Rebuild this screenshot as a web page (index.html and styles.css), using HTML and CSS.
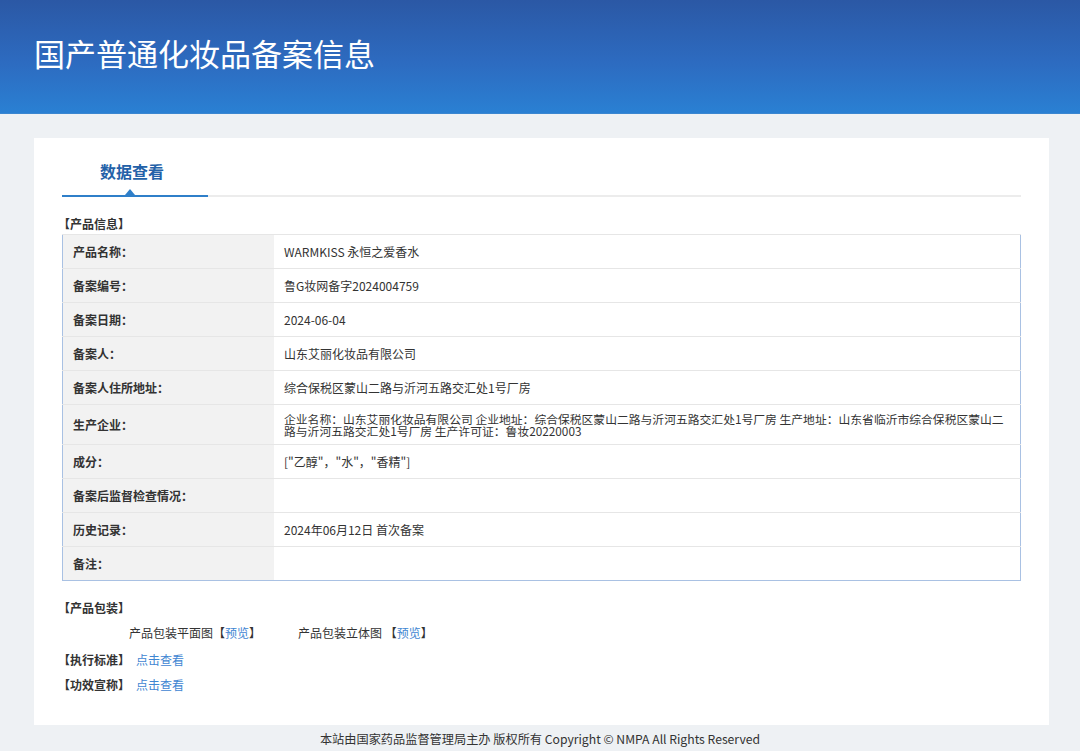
FILE: index.html
```html
<!DOCTYPE html>
<html lang="zh-CN">
<head>
    <meta charset="UTF-8">
    <meta name="viewport" content="width=device-width, initial-scale=1.0">
    <title>国产普通化妆品备案信息</title>
    <link rel="stylesheet" href="styles.css">
</head>
<body>
    <header class="banner">
        <h1>国产普通化妆品备案信息</h1>
    </header>

    <main class="card">
        <div class="tabs">
            <span class="tab active">数据查看</span>
        </div>

        <h3 class="section-title">【产品信息】</h3>
        <table class="info">
            <tr><th>产品名称：</th><td>WARMKISS 永恒之爱香水</td></tr>
            <tr><th>备案编号：</th><td>鲁G妆网备字2024004759</td></tr>
            <tr><th>备案日期：</th><td>2024-06-04</td></tr>
            <tr><th>备案人：</th><td>山东艾丽化妆品有限公司</td></tr>
            <tr><th>备案人住所地址：</th><td>综合保税区蒙山二路与沂河五路交汇处1号厂房</td></tr>
            <tr class="tall"><th>生产企业：</th><td class="multi">企业名称：山东艾丽化妆品有限公司 企业地址：综合保税区蒙山二路与沂河五路交汇处1号厂房 生产地址：山东省临沂市综合保税区蒙山二路与沂河五路交汇处1号厂房 生产许可证：鲁妆20220003</td></tr>
            <tr><th>成分：</th><td>["乙醇"，"水"，"香精"]</td></tr>
            <tr><th>备案后监督检查情况：</th><td></td></tr>
            <tr><th>历史记录：</th><td>2024年06月12日 首次备案</td></tr>
            <tr><th>备注：</th><td></td></tr>
        </table>

        <h3 class="section-title pack-title">【产品包装】</h3>
        <div class="pack">
            <span>产品包装平面图【<a href="#">预览</a>】</span>
            <span>产品包装立体图 【<a href="#">预览</a>】</span>
        </div>

        <div class="line"><b>【执行标准】</b><a href="#">点击查看</a></div>
        <div class="line"><b>【功效宣称】</b><a href="#">点击查看</a></div>
    </main>

    <footer class="footer">本站由国家药品监督管理局主办 版权所有 Copyright © NMPA All Rights Reserved</footer>
</body>
</html>
```

FILE: styles.css
```css
body {
    margin: 0;
    padding: 0;
    background-color: #eef1f4;
    font-family: "Noto Sans CJK SC", "Noto Sans", sans-serif;
    font-size: 12px;
    color: #333;
}

.banner {
    height: 114px;
    background: linear-gradient(180deg, #2b58a5 0%, #2d6bc0 55%, #2a80d3 100%);
    border-bottom: 1px solid #3a86d0;
    box-sizing: border-box;
    padding: 33px 0 0 34px;
}

.banner h1 {
    margin: 0;
    color: #fff;
    font-size: 31px;
    font-weight: normal;
    line-height: 40px;
}

.card {
    background-color: #fff;
    margin: 24px 31px 0 34px;
    padding: 14px 28px 28px 28px;
    min-height: 545px;
}

.tabs {
    border-bottom: 2px solid #ececec;
    height: 43px;
    display: flex;
}

.tab {
    position: relative;
    width: 146px;
    box-sizing: border-box;
    padding: 8px 0 0 38px;
    font-size: 16px;
    font-weight: bold;
    color: #2361a8;
    line-height: 22px;
}

.tab.active {
    border-bottom: 2px solid #2f7fc9;
    margin-bottom: -2px;
}

.tab.active::after {
    content: "";
    position: absolute;
    left: 63px;
    bottom: 0;
    border-left: 5px solid transparent;
    border-right: 5px solid transparent;
    border-bottom: 6px solid #2f7fc9;
}

.section-title {
    margin: 17px 0 0 0;
    font-size: 12px;
    font-weight: bold;
    line-height: 20px;
    margin-left: -4px;
}

.info {
    width: 100%;
    border-collapse: collapse;
    border: 1px solid #a9c1e3;
}

.info th,
.info td {
    height: 33px;
    padding: 0 10px;
    border-top: 1px solid #e6e6e6;
    text-align: left;
    vertical-align: middle;
    font-size: 12px;
}

.info th {
    width: 191px;
    background-color: #f2f2f2;
    font-weight: bold;
}

.info td {
    background-color: #fff;
    padding-right: 8px;
}

.info .tall th,
.info .tall td {
    height: 39px;
}

.info .multi {
    line-height: 12px;
    font-size: 11.8px;
}

.pack-title {
    margin-top: 17px;
}

.pack {
    display: flex;
    gap: 37px;
    padding-left: 67px;
    margin-top: 5px;
    line-height: 20px;
}

.line {
    margin-top: 9px;
    margin-left: -4px;
    line-height: 16px;
}

.line b {
    margin-right: 6px;
}

a {
    color: #3f86d2;
    text-decoration: none;
}

.footer {
    text-align: center;
    font-size: 12.2px;
    line-height: 28px;
    color: #333;
}
```
